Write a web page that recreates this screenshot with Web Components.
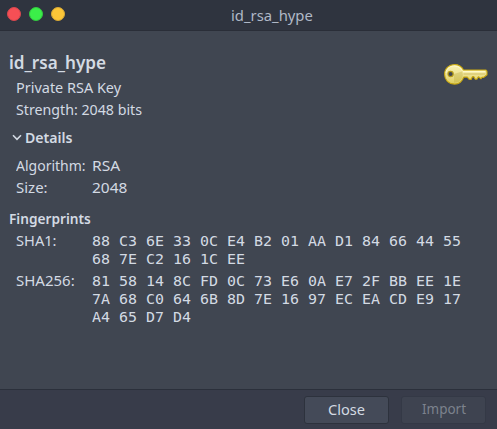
<!DOCTYPE html>
<html lang="en"><head><meta charset="utf-8"><title>id_rsa_hype</title>
<style>
html,body{margin:0;height:100%;overflow:hidden}
body{background:#404651;color:#d3dae3;font-family:"Noto Sans",sans-serif;font-size:15px}
</style></head><body>
<key-dialog></key-dialog>
<script>
const define=(name,html,ready)=>customElements.define(name,class extends HTMLElement{
 connectedCallback(){
  if(this.shadowRoot)return;
  this.attachShadow({mode:'open'}).innerHTML=html;
  if(ready)ready(this);
 }
});
// One line of text, condensed or widened to the advance given by its "w" attribute.
define('fit-text',`<style>:host{display:block;white-space:pre;line-height:22px;height:22px}span{display:inline-block;transform-origin:0 50%}</style><span><slot></slot></span>`,el=>{
 const s=el.shadowRoot.querySelector('span');
 const w=+el.getAttribute('w');
 el.style.width=w+'px';
 requestAnimationFrame(()=>{s.style.transform='scaleX('+w/s.offsetWidth+')'});
});
define('title-bar',`<style>
:host{display:grid;grid-template-columns:1fr auto 1fr;height:30px;padding-left:46px;background:#2f343f;border-bottom:1px solid #2a2e38;color:#afb8c6;font-size:15px;box-sizing:content-box}
.dots{display:flex;gap:8px;padding:7px 0 0 7px;margin-left:-46px}
i{width:14px;height:14px;border-radius:50%;box-sizing:border-box;background:var(--c);border:1px solid var(--b)}
.t{padding-top:4px}
</style><div class="dots"><i style="--c:#f64f55;--b:#d8474e"></i><i style="--c:#3bee49;--b:#32c840"></i><i style="--c:#fcc638;--b:#d7a935"></i></div><div class="t"><slot></slot></div>`);
define('key-icon',`<style>:host{display:block;width:46px;height:24px}svg{display:block}</style>
<svg width="46" height="24" viewBox="0 0 46 24"><defs><linearGradient id="g" x1="0" y1="0" x2="0" y2="1"><stop offset="0" stop-color="#faf3b4"/><stop offset=".5" stop-color="#eee394"/><stop offset="1" stop-color="#dfce5c"/></linearGradient></defs>
<path fill-rule="evenodd" fill="url(#g)" stroke="#c9a810" stroke-width="1.1" stroke-linejoin="round" d="M11.5 1.6c4 0 7.300 2 9 5.400H43l1 1.400v3.300l-3.300 2.700-1.600-.2-1.100 1.600-2.600-2-1.500 2.300-1.600.1-1.600-2.600-1.300.1-1.300 2.700-2-.1-1.800-2.200H20.700c-1.500 4.500-5 7-9.200 7C5.700 21.100 1.600 17 1.600 11.300S5.700 1.600 11.500 1.600Z"/>
<path d="M11 11 19 8.500c2 4 0 8-3 10.200l-5 1Z" fill="#b9aa3c" opacity=".35"/><path d="M20 8.700h22" stroke="#fffbd0" stroke-width="1.200"/><path d="M20.500 11h22" stroke="#d2c067"/><path d="M3 10c.5-5 5-7.500 9-7 3.500.3 6 2.300 7 4.500" fill="none" stroke="#fff9cc"/><circle cx="7.600" cy="11" r="2.600" fill="#404651" stroke="#b49a18" stroke-width="1.200"/></svg>`);
define('key-field',`<style>:host{display:grid;grid-template-columns:76px 1fr}</style><slot name="label"></slot><div><slot></slot></div>`);
define('hex-dump',`<style>:host{display:block;width:346px;white-space:pre;font:14px/18px "DejaVu Sans Mono",monospace;transform:scaleX(1.068);transform-origin:0 0}</style><slot></slot>`);
define('push-button',`<style>:host{display:flex;justify-content:center;box-sizing:border-box;width:85px;height:28px;padding-top:1px;border:1px solid #2d323d;border-radius:3px;background:#444a58;color:#d3dae3}
:host([disabled]){padding-top:0;background:#3e4350;border-color:#343946;color:#7c828d}</style><slot></slot>`);
define('button-bar',`<style>:host{display:flex;justify-content:flex-end;gap:12px;box-sizing:border-box;height:40px;padding:6px 11px 0 0;border-top:1px solid #2b303b;background:#383c4a}</style><slot></slot>`);
define('key-summary',`<style>:host{display:flex;justify-content:space-between;align-items:flex-start}.d{padding-left:7px}.i{padding:13px 8px 0 0}</style><div><slot name="name"></slot><div class="d"><slot></slot></div></div><div class="i"><key-icon></key-icon></div>`);
define('key-section',`<style>:host{display:block}.h{display:flex;align-items:center;gap:3px;font-weight:600}.c{padding:var(--pad,0) 0 0 7px}svg{margin-left:3px}:host(:not([open])) svg{display:none}</style><div class="h"><svg width="10" height="7" viewBox="0 0 10 7"><path d="m1 1.300 4 4 4-4" fill="none" stroke="#d3dae3" stroke-width="1.600"/></svg><slot name="title"></slot></div><div class="c"><slot></slot></div>`);
define('key-dialog',`<style>
:host{display:flex;flex-direction:column;height:429px;width:497px}
main{flex:1;padding:19px 0 0 9px;min-height:0}
.name{font-size:17.500px;font-weight:600;line-height:24px;margin-bottom:4px}
.details{margin-top:6px;--pad:6px}.prints{margin-top:9px}
.sha1{margin-top:3px}.sha256{margin-top:4px}
</style>
<title-bar><fit-text w="82">id_rsa_hype</fit-text></title-bar>
<main>
<key-summary><fit-text slot="name" class="name" w="97">id_rsa_hype</fit-text><fit-text w="105">Private RSA Key</fit-text><fit-text w="126">Strength: 2048 bits</fit-text></key-summary>
<key-section class="details" open><fit-text slot="title" w="48">Details</fit-text>
<key-field><fit-text slot="label" w="70">Algorithm:</fit-text><fit-text w="28">RSA</fit-text></key-field>
<key-field><fit-text slot="label" w="32">Size:</fit-text><fit-text w="35">2048</fit-text></key-field></key-section>
<key-section class="prints"><fit-text slot="title" w="82">Fingerprints</fit-text>
<key-field><fit-text slot="label" w="41">SHA1:</fit-text><hex-dump class="sha1">88 C3 6E 33 0C E4 B2 01 AA D1 84 66 44 55
68 7E C2 16 1C EE</hex-dump></key-field>
<key-field style="margin-top:1px"><fit-text slot="label" w="59">SHA256:</fit-text><hex-dump style="margin-top:3px">81 58 14 8C FD 0C 73 E6 0A E7 2F BB EE 1E
7A 68 C0 64 6B 8D 7E 16 97 EC EA CD E9 17
A4 65 D7 D4</hex-dump></key-field></key-section>
</main>
<button-bar><push-button><fit-text w="37">Close</fit-text></push-button><push-button disabled><fit-text w="44">Import</fit-text></push-button></button-bar>`);
</script></body></html>
